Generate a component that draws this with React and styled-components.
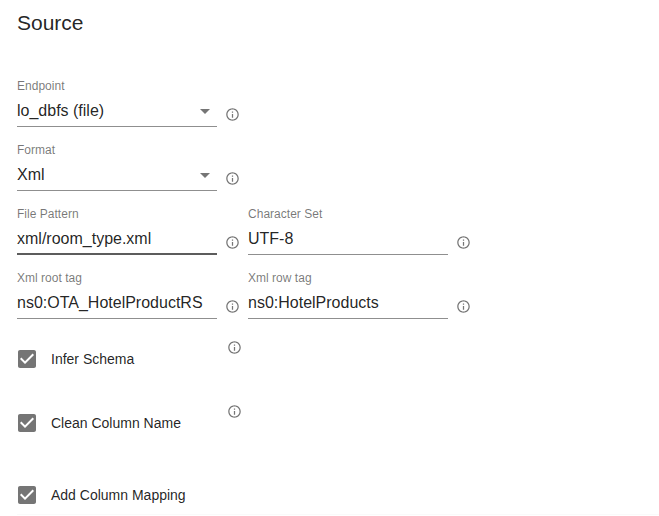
import React from "react";
import styled, { createGlobalStyle } from "styled-components";

const GlobalStyle = createGlobalStyle`
  *, *::before, *::after { box-sizing: border-box; }
  body {
    margin: 0;
    background: #fff;
    color: rgba(0, 0, 0, 0.87);
    font-family: "Liberation Sans", Arial, sans-serif;
    overflow: hidden;
  }
`;

const Page = styled.main`
  height: 516px;
  padding: 7px 0 0 17px;
  overflow: hidden;
`;

const Title = styled.h1`
  margin: 0 0 40px;
  height: 32px;
  font-size: 21px;
  font-weight: 400;
  line-height: 32px;
`;

const Fields = styled.section`
  display: grid;
  grid-template-columns: 231px 231px;
  grid-auto-rows: 64px;
`;

const Field = styled.div`
  display: flex;
  height: 48px;
  grid-column: ${(p) => p.$column};
`;

const Control = styled.div`
  width: 200px;
  height: 48px;
  border-bottom: ${(p) => (p.$active ? "2px solid #5c5c5c" : "1px solid #8f8f8f")};
`;

const Label = styled.label`
  display: block;
  height: 16px;
  font-size: 12px;
  line-height: 14px;
  letter-spacing: 0.02px;
  color: rgba(0, 0, 0, 0.54);
`;

const ValueRow = styled.div`
  display: flex;
  height: 30px;
  justify-content: space-between;
`;

const Value = styled.span`
  font-size: 16px;
  line-height: 31px;
  white-space: nowrap;
`;

const Arrow = styled.svg`
  width: 24px;
  height: 24px;
  margin-top: 4px;
  fill: #757575;
`;

const InfoSvg = styled.svg`
  flex: none;
  width: 15px;
  height: 15px;
  fill: #757575;
`;

const FieldInfo = styled.span`
  display: flex;
  margin: 28px 0 0 8px;
`;

const Options = styled.section`
  display: flex;
  flex-direction: column;
`;

const Option = styled.div`
  display: flex;
  align-items: flex-start;
  height: ${(p) => p.$height}px;
`;

const OptionLabel = styled.label`
  display: flex;
  align-items: center;
  gap: 12px;
  width: 210px;
  height: 24px;
  margin: 12px 0 0 -2px;
  font-size: 14px;
`;

const CheckSvg = styled.svg`
  width: 24px;
  height: 24px;
  fill: #757575;
`;

const OptionInfo = styled.span`
  display: flex;
  margin: 5px 0 0 2px;
`;

const Divider = styled.hr`
  width: 100%;
  height: 1px;
  margin: 0;
  border: 0;
  background: #fafafa;
`;

function Info() {
  return (
    <InfoSvg viewBox="0 0 24 24" role="img" aria-label="Info">
      <path d="M11 7h2v2h-2zm0 4h2v6h-2zm1-9C6.48 2 2 6.48 2 12s4.48 10 10 10 10-4.48 10-10S17.52 2 12 2zm0 18c-4.41 0-8-3.59-8-8s3.59-8 8-8 8 3.59 8 8-3.59 8-8 8z" />
    </InfoSvg>
  );
}

const fields = [
  { label: "Endpoint", value: "lo_dbfs (file)", column: 1, select: true },
  { label: "Format", value: "Xml", column: 1, select: true },
  { label: "File Pattern", value: "xml/room_type.xml", column: 1, active: true },
  { label: "Character Set", value: "UTF-8", column: 2 },
  { label: "Xml root tag", value: "ns0:OTA_HotelProductRS", column: 1 },
  { label: "Xml row tag", value: "ns0:HotelProducts", column: 2 },
];

const options = [
  { label: "Infer Schema", height: 64, info: true },
  { label: "Clean Column Name", height: 72, info: true },
  { label: "Add Column Mapping", height: 43 },
];

export default function App() {
  return (
    <>
      <GlobalStyle />
      <Page>
        <Title>Source</Title>
        <Fields>
          {fields.map((f) => (
            <Field key={f.label} $column={f.column}>
              <Control $active={f.active}>
                <Label>{f.label}</Label>
                <ValueRow>
                  <Value>{f.value}</Value>
                  {f.select && (
                    <Arrow viewBox="0 0 24 24" aria-hidden="true">
                      <path d="M7 10l5 5 5-5z" />
                    </Arrow>
                  )}
                </ValueRow>
              </Control>
              <FieldInfo>
                <Info />
              </FieldInfo>
            </Field>
          ))}
        </Fields>
        <Options>
          {options.map((o) => (
            <Option key={o.label} $height={o.height}>
              <OptionLabel>
                <CheckSvg viewBox="0 0 24 24" role="img" aria-label="Checked">
                  <path d="M19 3H5c-1.11 0-2 .9-2 2v14c0 1.1.89 2 2 2h14c1.11 0 2-.9 2-2V5c0-1.1-.89-2-2-2zm-9 14l-5-5 1.41-1.41L10 14.17l7.59-7.59L19 8l-9 9z" />
                </CheckSvg>
                {o.label}
              </OptionLabel>
              {o.info && (
                <OptionInfo>
                  <Info />
                </OptionInfo>
              )}
            </Option>
          ))}
        </Options>
        <Divider />
      </Page>
    </>
  );
}
